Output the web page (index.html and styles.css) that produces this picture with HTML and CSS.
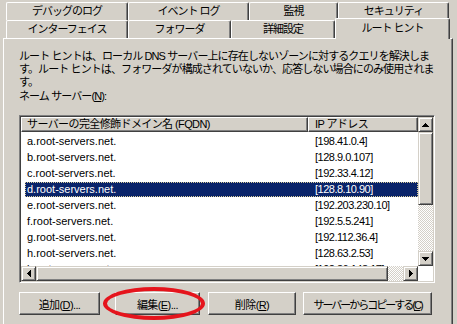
FILE: index.html
```html
<!DOCTYPE html>
<html lang="ja">
<head>
  <meta charset="UTF-8">
  <title>ルート ヒント</title>
  <link rel="stylesheet" href="styles.css">
</head>
<body>
  <div class="tabs">
    <div class="tab-row">
      <div class="tab w-debug">デバッグのログ</div>
      <div class="tab w-event">イベント ログ</div>
      <div class="tab w-monitor">監視</div>
      <div class="tab w-security">セキュリティ</div>
    </div>
    <div class="tab-row">
      <div class="tab w-debug">インターフェイス</div>
      <div class="tab w-forward">フォワーダ</div>
      <div class="tab w-advanced">詳細設定</div>
      <div class="tab active">ルート ヒント</div>
    </div>
  </div>

  <div class="panel">
    <p class="intro">
      <span class="line">ルート ヒントは、ローカル DNS サーバー上に存在しないゾーンに対するクエリを解決しま</span>
      <span class="line">す。ルート ヒントは、フォワーダが構成されていないか、応答しない場合にのみ使用されま</span>
      <span class="line">す。</span>
    </p>
    <div class="label">ネーム サーバー(<u>N</u>):</div>

    <div class="listview">
      <div class="lv-main">
        <div class="lv-header">
          <div class="col col-name">サーバーの完全修飾ドメイン名 (FQDN)</div>
          <div class="col col-ip">IP アドレス</div>
        </div>
        <div class="lv-rows">
          <div class="row"><span>a.root-servers.net.</span><span class="ip">[198.41.0.4]</span></div>
          <div class="row"><span>b.root-servers.net.</span><span class="ip">[128.9.0.107]</span></div>
          <div class="row"><span>c.root-servers.net.</span><span class="ip">[192.33.4.12]</span></div>
          <div class="row selected"><span>d.root-servers.net.</span><span class="ip">[128.8.10.90]</span></div>
          <div class="row"><span>e.root-servers.net.</span><span class="ip">[192.203.230.10]</span></div>
          <div class="row"><span>f.root-servers.net.</span><span class="ip">[192.5.5.241]</span></div>
          <div class="row"><span>g.root-servers.net.</span><span class="ip">[192.112.36.4]</span></div>
          <div class="row"><span>h.root-servers.net.</span><span class="ip">[128.63.2.53]</span></div>
          <div class="row"><span>i.root-servers.net.</span><span class="ip">[192.36.148.17]</span></div>
        </div>
      </div>
      <div class="vscroll">
        <div class="sb-btn"><svg width="7" height="4" viewBox="0 0 7 4"><path d="M3 0h1v1h1v1h1v1h1v1H0V3h1V2h1V1h1z" fill="#000"/></svg></div>
        <div class="thumb v-thumb"></div>
        <div class="track"></div>
        <div class="sb-btn"><svg width="7" height="4" viewBox="0 0 7 4"><path d="M0 0h7v1H6v1H5v1H4v1H3V3H2V2H1V1H0z" fill="#000"/></svg></div>
      </div>
      <div class="hscroll">
        <div class="sb-btn"><svg width="4" height="7" viewBox="0 0 4 7"><path d="M3 0h1v7H3V6H2V5H1V4H0V3h1V2h1V1h1z" fill="#000"/></svg></div>
        <div class="thumb h-thumb"></div>
        <div class="track"></div>
        <div class="sb-btn"><svg width="4" height="7" viewBox="0 0 4 7"><path d="M0 0h1v1h1v1h1v1h1v1H3v1H2v1H1v1H0z" fill="#000"/></svg></div>
      </div>
      <div class="corner"></div>
    </div>

    <div class="buttons">
      <button class="btn w-add">追加(<u>D</u>)...</button>
      <button class="btn w-edit">編集(<u>E</u>)...</button>
      <button class="btn w-remove">削除(<u>R</u>)</button>
      <button class="btn w-copy">サーバーからコピーする(<u>C</u>)</button>
      <div class="mark"></div>
    </div>
  </div>
</body>
</html>
```

FILE: styles.css
```css
body {
  margin: 0;
  width: 457px;
  height: 324px;
  overflow: hidden;
  background-color: #d4d0c8;
  color: #000;
  font-family: "Liberation Sans", "Noto Sans CJK JP", sans-serif;
  font-size: 11px;
}
u {
  text-decoration: underline;
}

/* tab strip */
.tabs {
  padding: 2px 0 0 6px;
}
.tab-row {
  display: flex;
  height: 18px;
}
.tab {
  box-sizing: border-box;
  height: 18px;
  background-color: #d4d0c8;
  border-top: 1px solid #fff;
  border-left: 1px solid #fff;
  border-right: 1px solid #404040;
  border-radius: 2px 2px 0 0;
  box-shadow: inset -1px 0 #808080;
  text-align: center;
  line-height: 16px;
  letter-spacing: -1px;
  white-space: nowrap;
}
.w-debug { width: 122px; }
.w-event { width: 121px; }
.w-monitor { width: 89px; }
.w-security { width: 111px; }
.w-forward { width: 103px; }
.w-advanced { width: 104px; }
.tab.active {
  position: relative;
  z-index: 1;
  width: 115px;
  height: 21px;
  margin-top: -2px;
  line-height: 19px;
}

/* property page */
.panel {
  box-sizing: border-box;
  width: 450px;
  height: 286px;
  margin-left: 3px;
  padding: 11px 0 0 15px;
  border-top: 1px solid #fff;
  border-left: 1px solid #fff;
  border-right: 1px solid #404040;
  box-shadow: inset -1px 0 #808080;
}
.intro {
  margin: 0;
  letter-spacing: -0.9px;
  white-space: nowrap;
}
.line {
  display: block;
  height: 13px;
  line-height: 13px;
}
.label {
  height: 13px;
  margin-top: 1px;
  line-height: 13px;
  letter-spacing: -0.9px;
}

/* list view */
.listview {
  box-sizing: border-box;
  width: 416px;
  height: 168px;
  margin-top: 12px;
  padding: 1px;
  background-color: #fff;
  border: 1px solid;
  border-color: #808080 #fff #fff #808080;
  box-shadow: inset 1px 1px #404040, inset -1px -1px #d4d0c8;
  display: grid;
  grid-template-columns: 397px 15px;
  grid-template-rows: 149px 15px;
}
.lv-main {
  overflow: hidden;
}
.lv-header {
  display: grid;
  grid-template-columns: 287px 110px;
}
.col {
  box-sizing: border-box;
  height: 15px;
  padding-left: 5px;
  background-color: #d4d0c8;
  border-top: 1px solid #fff;
  border-left: 1px solid #fff;
  border-right: 1px solid #404040;
  border-bottom: 1px solid #404040;
  box-shadow: inset -1px -1px #808080;
  line-height: 13px;
  letter-spacing: -0.6px;
  white-space: nowrap;
  overflow: hidden;
}
.col-ip {
  padding-left: 6px;
}
.lv-rows {
  padding-top: 2px;
}
.row {
  display: grid;
  grid-template-columns: 283px 1fr;
  height: 15px;
  margin: 0 0 1px 4px;
  line-height: 15px;
  white-space: nowrap;
}
.row span:first-child {
  padding-left: 2px;
}
.row .ip {
  padding-left: 7px;
  letter-spacing: -0.5px;
}
.row.selected {
  background-color: #0a246a;
  color: #fff;
  outline: 1px dotted #d8cc98;
  outline-offset: -1px;
}

/* scroll bars */
.vscroll {
  display: flex;
  flex-direction: column;
}
.hscroll {
  display: flex;
}
.sb-btn,
.thumb {
  box-sizing: border-box;
  flex: none;
  width: 15px;
  height: 15px;
  background-color: #d4d0c8;
  border: 1px solid;
  border-color: #d4d0c8 #404040 #404040 #d4d0c8;
  box-shadow: inset 1px 1px #fff, inset -1px -1px #808080;
  display: flex;
  align-items: center;
  justify-content: center;
}
.v-thumb {
  height: 73px;
}
.h-thumb {
  width: 352px;
}
.track {
  flex: 1;
  background-color: #fff;
  background-image: repeating-conic-gradient(#d4d0c8 0 25%, #fff 0 50%);
  background-size: 2px 2px;
}
.corner {
  background-color: #fff;
}

/* buttons */
.buttons {
  position: relative;
  display: flex;
  height: 23px;
  margin-top: 9px;
}
.btn {
  box-sizing: border-box;
  height: 23px;
  padding: 0;
  background-color: #d4d0c8;
  border: 1px solid;
  border-color: #fff #404040 #404040 #fff;
  box-shadow: inset -1px -1px #808080;
  font-family: inherit;
  font-size: 11px;
  letter-spacing: -0.6px;
  color: #000;
  white-space: nowrap;
  overflow: hidden;
}
.w-add { width: 81px; }
.w-edit { width: 85px; margin-left: 15px; }
.w-remove { width: 88px; margin-left: 8px; }
.w-copy { width: 129px; margin-left: 7px; letter-spacing: -2px; }

/* red highlight drawn over the edit button */
.mark {
  position: absolute;
  left: 84px;
  top: -5px;
  box-sizing: border-box;
  width: 102px;
  height: 33px;
  border: 4px solid #e5141c;
  border-radius: 50%;
}
```
